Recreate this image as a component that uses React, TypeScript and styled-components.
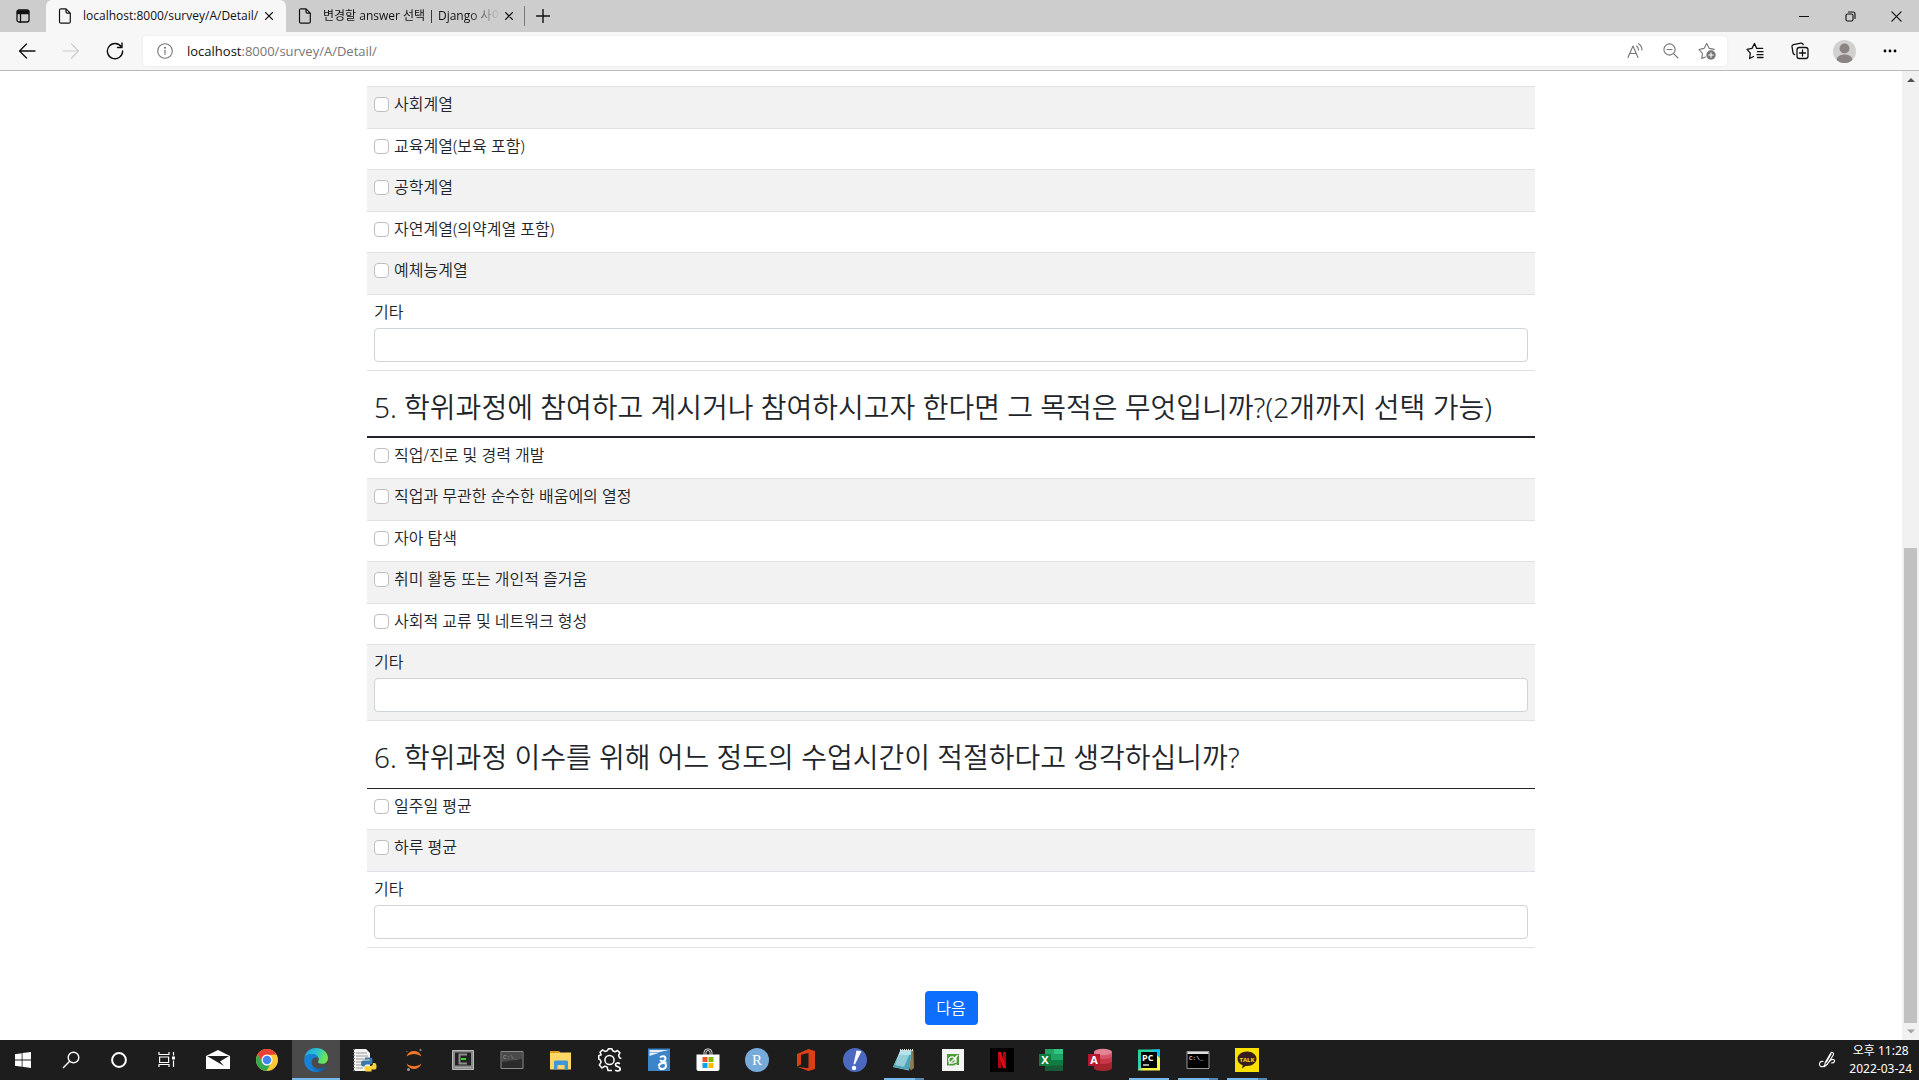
import React from "react";
import styled, { createGlobalStyle } from "styled-components";

const uiFont = `"Open Sans", "Noto Sans CJK KR", sans-serif`;

const GlobalStyle = createGlobalStyle`
  *, *::before, *::after { box-sizing: border-box; }
  body { margin: 0; background: #fff; }
  button, input { font: inherit; }
  svg { display: block; flex: none; }
`;

const Screen = styled.div`
  display: flex;
  flex-direction: column;
  height: 100vh;
  overflow: hidden;
  font-family: ${uiFont};
  color: #212529;
`;

/* ---------- browser chrome ---------- */

const IconButton = styled.button<{ $w?: number; $h?: number; $muted?: boolean }>`
  display: flex;
  flex: none;
  align-items: center;
  justify-content: center;
  width: ${(p) => p.$w ?? 36}px;
  height: ${(p) => p.$h ?? 30}px;
  padding: 0;
  border: 0;
  background: transparent;
  color: ${(p) => (p.$muted ? "#767676" : "#111")};
`;

const TitleBar = styled.header`
  display: flex;
  flex: none;
  height: 32px;
  background: #cdcdcd;
`;

const TabButton = styled.div<{ $active?: boolean }>`
  display: flex;
  align-items: center;
  flex: none;
  width: 240px;
  height: 32px;
  padding: 0 8px 0 12px;
  border-radius: 6px 6px 0 0;
  font-size: 12px;
  color: #111;
  background: ${(p) => (p.$active ? "#f7f7f7" : "transparent")};
`;

const TabLabel = styled.span<{ $fade?: boolean }>`
  flex: 1;
  min-width: 0;
  margin-left: 11px;
  white-space: nowrap;
  line-height: 18px;
  ${(p) => p.$fade && "mask-image: linear-gradient(to right, #000 82%, transparent);"}
`;

const TabSeparator = styled.span`
  width: 1px;
  height: 20px;
  margin: 6px 0 0 -2px;
  background: #777;
`;

const WindowControls = styled.div`
  display: flex;
  margin-left: auto;
`;

const Toolbar = styled.div`
  display: flex;
  align-items: center;
  flex: none;
  height: 39px;
  padding: 0 7px 0 5px;
  background: #f7f7f7;
  border-bottom: 1px solid #bbb;
`;

const NavButtons = styled.nav`
  display: flex;
  width: 138px;
`;

const AddressBar = styled.form`
  display: flex;
  align-items: center;
  flex: 1;
  height: 30px;
  padding: 0 2px 0 14px;
  border-radius: 4px;
  background: #fff;
  box-shadow: 0 0 3px #e4e4e4;
  color: #767676;
`;

const Address = styled.div`
  flex: 1;
  margin-left: 14px;
  font-size: 13px;
  line-height: 20px;
  b { font-weight: 400; color: #111; }
`;

const ToolbarActions = styled.div`
  display: flex;
  padding-left: 5px;
`;

/* ---------- page ---------- */

const Viewport = styled.div`
  display: flex;
  flex: 1;
  min-height: 0;
`;

const Page = styled.main`
  flex: 1;
  overflow: hidden;
  padding: 15px 0;
  font-family: "Noto Sans", "Noto Sans CJK KR", sans-serif;
  font-size: 16px;
  font-weight: 350;
`;

const Survey = styled.form`
  display: flex;
  flex-direction: column;
  width: 1168px;
  max-width: 100%;
  margin: 0 auto;
`;

const Question = styled.fieldset`
  min-width: 0;
  margin: 0;
  padding: 0;
  border: 0;
`;

const QuestionTitle = styled.legend<{ $line: number }>`
  display: block;
  width: 100%;
  height: ${(p) => 69 - p.$line}px;
  padding: 19px 7px 0;
  border-bottom: ${(p) => p.$line}px solid #212529;
  font-size: 28px;
  line-height: 34px;
`;

const Options = styled.ul<{ $topLine?: boolean }>`
  list-style: none;
  margin: 0;
  padding: 0;
  border-top: ${(p) => (p.$topLine ? "1px solid #dee2e6" : "0")};
`;

const Option = styled.li<{ $shaded: boolean }>`
  height: ${(p) => (p.$shaded ? 42 : 41)}px;
  padding: 6px 7px;
  border-bottom: 1px solid #dee2e6;
  background: ${(p) => (p.$shaded ? "#f2f2f2" : "#fff")};
  label {
    display: inline-flex;
    align-items: center;
    gap: 5px;
    line-height: 22px;
  }
`;

const Check = styled.input`
  appearance: none;
  width: 15px;
  height: 15px;
  margin: 0;
  border: 1px solid #bfbfbf;
  border-radius: 4px;
  background: #fff;
`;

const OtherOption = styled.li<{ $shaded: boolean }>`
  display: flex;
  flex-direction: column;
  gap: 5px;
  height: 76px;
  padding: 6px 7px;
  border-bottom: 1px solid #dee2e6;
  background: ${(p) => (p.$shaded ? "#f2f2f2" : "#fff")};
  label { line-height: 22px; }
`;

const TextField = styled.input`
  width: 100%;
  height: 34px;
  padding: 5px 11px;
  border: 1px solid #ced4da;
  border-radius: 4px;
  background: #fff;
`;

const NextButton = styled.button`
  align-self: center;
  width: 53px;
  height: 34px;
  margin-top: 43px;
  padding: 0;
  border: 0;
  border-radius: 4px;
  background: #0d6efd;
  color: #fff;
  line-height: 22px;
`;

const ScrollTrack = styled.div`
  display: flex;
  flex-direction: column;
  flex: none;
  width: 17px;
  background: #f1f1f1;
`;
const ScrollGap = styled.div`flex: 460;`;
const ScrollThumb = styled.div`
  flex: 475;
  margin: 0 2px;
  background: #c1c1c1;
`;

/* ---------- taskbar ---------- */

const Taskbar = styled.footer`
  display: flex;
  flex: none;
  height: 40px;
  background: #1d1d1d;
  color: #fff;
`;

const TaskButton = styled.button<{ $active?: boolean }>`
  position: relative;
  display: flex;
  align-items: center;
  justify-content: center;
  width: 48px;
  height: 40px;
  padding: 0;
  border: 0;
  color: #fff;
  background: ${(p) => (p.$active ? "#4a4a4a" : "transparent")};
`;

const SystemGroup = styled.div`
  display: flex;
  margin-right: 2px;
  ${TaskButton} { padding-right: 2px; }
`;

const AppGroup = styled.div`
  display: flex;
  gap: 1px;
`;

const Running = styled.span<{ $kind: "full" | "single" | "stack" }>`
  position: absolute;
  bottom: 0;
  left: ${(p) => (p.$kind === "full" ? 0 : 4)}px;
  right: ${(p) => (p.$kind === "full" ? 0 : 4)}px;
  height: 2px;
  background: ${(p) =>
    p.$kind === "stack" ? "linear-gradient(to right, #76b9ed 31px, #5588b0 31px)" : "#76b9ed"};
`;

const Tray = styled.div`
  display: flex;
  align-items: center;
  gap: 13px;
  margin-left: auto;
  padding-right: 7px;
`;

const Clock = styled.div`
  font-size: 12px;
  font-family: "Noto Sans", "Noto Sans CJK KR", sans-serif;
  line-height: 18px;
  text-align: center;
`;

/* ---------- icons ---------- */

type LineProps = { w?: number; h?: number; box?: string; sw?: number; children: React.ReactNode };
const Line = ({ w = 16, h, box, sw = 1, children }: LineProps) => (
  <svg width={w} height={h ?? w} viewBox={box ?? `0 0 ${w} ${h ?? w}`} fill="none" stroke="currentColor" strokeWidth={sw} strokeLinecap="round" strokeLinejoin="round" aria-hidden="true">
    {children}
  </svg>
);

const PageIcon = () => (
  <Line w={14} h={16} sw={1.2}>
    <path d="M3 .8h5l4.300 4.300v8.600q0 1.500-1.500 1.500H3q-1.500 0-1.500-1.500V2.300Q1.500.8 3 .8ZM8 .8v3q0 1.300 1.300 1.300h3" />
  </Line>
);
const CloseIcon = ({ size = 8, sw = 1.6 }) => (
  <Line w={size} box="0 0 10 10" sw={sw}><path d="M.8.8l8.400 8.400M9.200.8L.8 9.200" /></Line>
);
const TabMenuIcon = () => (
  <Line w={14} sw={1.3}>
    <rect x="1" y="1" width="12" height="12" rx="2" />
    <path d="M1.500 2h11v2.500h-11z" fill="currentColor" /><path d="M4.500 4v9" />
  </Line>
);
const BackIcon = () => <Line w={18} sw={1.3}><path d="M17 9H1.500M8.500 2L1.500 9l7 7" /></Line>;
const ForwardIcon = () => <Line w={18} sw={1.2}><path d="M1 9h15.500M9.500 2l7 7-7 7" stroke="#ccc" /></Line>;
const ReloadIcon = () => <Line w={18} sw={1.4}><path d="M15.500 5.200A7.600 7.600 0 1 0 16.600 9M16 1v4.500h-4.500" /></Line>;
const InfoIcon = () => (
  <Line w={16} sw={1.1}><circle cx="8" cy="8" r="7.300" /><path d="M8 7.200v4.300" /><circle cx="8" cy="4.700" r=".5" fill="currentColor" /></Line>
);
const ReadAloudIcon = () => (
  <Line w={16} sw={1.1}><path d="M1 14.500L6 3l5 11.500M2.800 10.500h6.400M9.500 3q2 1.500 2 4M11.500.8q3.500 2.200 3.500 6.200" /></Line>
);
const ZoomOutIcon = () => (
  <Line w={16} sw={1.1}><circle cx="6.500" cy="6.500" r="5.600" /><path d="M10.600 10.600L15 15M4 6.500h5" /></Line>
);
const FavoriteAddIcon = () => (
  <Line w={18} sw={1.1}>
    <path d="M7.500 15l-3.700 1.600.6-5.200L1 7.500l5-1.100L8.700 1.500l2.600 4.900 4.900 1" />
    <circle cx="13" cy="13" r="4.700" fill="#767676" stroke="none" /><path d="M13 10.800v4.400M10.800 13h4.400" stroke="#fff" />
  </Line>
);
const FavoritesIcon = () => (
  <Line w={18} sw={1.3}>
    <path d="M7.500 14.500l-3.900 2 .7-5.400L1 7.400l5-1L8.500 1.500 10.700 6.400h6M11.500 9.700H17M11 12.700h6M11.500 15.500H17" />
  </Line>
);
const CollectionsIcon = () => (
  <Line w={18} sw={1.3}>
    <rect x="6" y="5.500" width="11" height="11" rx="2.300" /><path d="M11.500 8v6M8.500 11h6M3.600 12.500q-1.300-.3-1.600-1.700L1 4.700q-.2-1.700 1.400-2.100L10 1.200q1.600-.2 2.200 1.500" />
  </Line>
);
const Avatar = () => (
  <svg width="23" height="23" viewBox="0 0 24 24" aria-hidden="true">
    <clipPath id="avatarClip"><circle cx="12" cy="12" r="12" /></clipPath>
    <g clipPath="url(#avatarClip)"><rect width="24" height="24" fill="#d2d0ce" /><circle cx="12" cy="8.800" r="5.200" fill="#8a8583" /><ellipse cx="12" cy="20.500" rx="8.300" ry="5.300" fill="#8a8583" /></g>
  </svg>
);
const MoreIcon = () => (
  <svg width="14" height="4" viewBox="0 0 14 4" aria-hidden="true"><circle cx="2" cy="2" r="1.400" /><circle cx="7" cy="2" r="1.400" /><circle cx="12" cy="2" r="1.400" /></svg>
);
const Arrow = ({ down = false }) => (
  <svg width="17" height="17" viewBox="0 0 17 17" aria-hidden="true">
    <path d={down ? "M5 6.500h8l-4 4z" : "M5 11h8l-4-4z"} fill={down ? "#a3a3a3" : "#505050"} />
  </svg>
);

const Art = ({ children, size = 24 }: { children: React.ReactNode; size?: number }) => (
  <svg width={size} height={size} viewBox="0 0 24 24" fontFamily='"Open Sans", sans-serif' aria-hidden="true">{children}</svg>
);

const WindowsLogo = () => (
  <Art><path fill="#fff" d="M4 6.200l6.700-1v6.400H4zM11.500 5.100L20 4v7.600h-8.500zM4 12.400h6.700v6.400l-6.700-1zM11.500 12.400H20V20l-8.500-1.200z" /></Art>
);
const SearchLogo = () => (
  <Art><g fill="none" stroke="#fff" strokeWidth="1.400"><circle cx="14.500" cy="9.500" r="5.300" /><path d="M10.700 13.300L4 20" /></g></Art>
);
const CortanaLogo = () => <Art><circle cx="12" cy="12" r="6.900" fill="none" stroke="#fff" strokeWidth="2" /></Art>;
const TaskViewLogo = () => (
  <Art><path d="M4 4v2.500h10V4M4 19v-2.500h10V19M4.600 9h9v5.500h-9zM18.500 4v3.500M18.500 12.500V19" fill="none" stroke="#fff" strokeWidth="1.200" /><path d="M17 8.500h3v3h-3z" fill="#fff" /></Art>
);
const MailLogo = () => (
  <Art><path fill="#fff" d="M0 8l12-6 12 6v13H0z" /><path fill="#1d1d1d" d="M1 8h22l-9 5.500 4 4.500L1 8z" /></Art>
);
const ChromeLogo = () => (
  <Art>
    <circle cx="12" cy="12" r="11" fill="#fcc934" />
    <path d="M2.500 6.500A11 11 0 0 1 21.600 6.600L12 7 7.600 14.500z" fill="#ea4335" />
    <path d="M2.500 6.500A11 11 0 0 0 11.500 23L16.300 14.500 12 17 7.700 14.500z" fill="#34a853" />
    <circle cx="12" cy="12" r="5.500" fill="#fff" /><circle cx="12" cy="12" r="4.300" fill="#4285f4" />
  </Art>
);
const EdgeLogo = () => (
  <Art>
    <defs>
      <linearGradient id="edgeTop" x1="0" x2="1" y1="0" y2=".3"><stop offset="0" stopColor="#1b9de2" /><stop offset=".55" stopColor="#2bc3d2" /><stop offset="1" stopColor="#6be84e" /></linearGradient>
      <linearGradient id="edgeLow" x1="0" x2="1"><stop offset="0" stopColor="#1683d9" /><stop offset="1" stopColor="#0c59a4" /></linearGradient>
    </defs>
    <path d="M.3 10.500C1 4 6 0 12 0c7 0 12 4.600 12 10 0 3.500-2.500 5.800-5.800 5.800-3 0-4.600-1-4.200-2 .5-1 .8-1.400.8-2.300C14.800 8.500 11.500 6 8 6 4.500 6 1.500 7.700.3 10.500z" fill="url(#edgeTop)" />
    <path d="M.2 12C.5 8.500 4 6 8 6c3.500 0 6.300 2 6.700 4.500-1-1-2-1.200-3-1.200-3 0-5 3-4.200 6.700.8 3.700 4 6.500 8 7.300-1.100.4-2.300.7-3.500.7C5.400 24 0 18.600.2 12z" fill="#1683d9" />
    <path d="M9.200 10.300C7.300 12 7 15 8.500 17.500c2 3.500 7 4.500 12.500 1.300.7-.3 1 .1.700.6C20 22 17.500 23.500 14.800 23.700 9 23.500 5 19.500 5 14.700c0-2.200 1.800-4 4.200-4.400z" fill="url(#edgeLow)" />
  </Art>
);
const PythonFileLogo = () => (
  <Art>
    <path d="M1 1h12l4 4v18H1z" fill="#f3f3f3" /><path d="M3 5h11M3 8h12M3 11h12M3 14h7M3 17h7M3 20h7" stroke="#999" /><path d="M1 1v22" stroke="#777" strokeDasharray="1 2" strokeWidth="2" />
    <path d="M12 9.500h5.500q2 0 2 2v3q0 2-2 2h-4q-2 0-2 2h-1q-2.500 0-2.500-3t2.500-3h6v-1H12z" fill="#3b78a8" />
    <path d="M18.500 23.500h-5q-2 0-2-1.500v-2q0-2 2-2h4q2.500 0 2.500-3h1.500q2 0 2 3.500t-2 3h-3z" fill="#ffd43b" />
  </Art>
);
const JupyterLogo = () => (
  <Art><path d="M4.500 8.500c2.500-7.300 12.500-7.300 15 0-4.500-3.500-10.500-3.500-15 0zM4.500 15.500c2.500 7.300 12.500 7.300 15 0-4.500 3.500-10.500 3.500-15 0z" fill="#f37626" /><circle cx="18.500" cy="2" r="1.200" fill="#777" /><circle cx="5" cy="3.500" r=".8" fill="#666" /><circle cx="6.500" cy="21.500" r="1.500" fill="#999" /></Art>
);
const EditorLogo = () => (
  <Art><path d="M1.500 2.500h21v19h-21z" fill="#8b8b8b" stroke="#bbb" /><path d="M4 4.500h16v13H4z" fill="#222" /><path d="M16 6.500H8.500v9H16" stroke="#8d8d8d" strokeWidth="2" fill="none" /><path d="M10 11h5" stroke="#2fd62f" strokeWidth="2" /><path d="M4 19.500h16" stroke="#aaa" /></Art>
);
const TerminalLogo = ({ bright = false }) => (
  <Art>
    <path d="M1 3.500h22v17H1z" fill={bright ? "#000" : "#2b2b2b"} stroke={bright ? "#999" : "#8a8a8a"} />
    {bright ? <path d="M1.500 5h21" stroke="#ddd" strokeWidth="2" /> : <path d="M2 4h20v7L2 14z" fill="#4a4a4a" />}
    <text x="3" y={bright ? 12 : 11} fontSize="6" fill={bright ? "#fff" : "#999"} fontFamily='"Liberation Mono", monospace'>C:\_</text>
  </Art>
);
const ExplorerLogo = () => (
  <Art><path d="M1 3h9l1.500 2H1z" fill="#d99312" /><path d="M1 4.500h21v17H1z" fill="#ffd767" /><path d="M1 3h8l1 2H1z" fill="#e0a01e" /><path d="M5 21.500V14q0-1.500 1.500-1.500h11q1.500 0 1.500 1.500v7.500h-3.500V17h-7v4.500z" fill="#3d97d8" /></Art>
);
const SettingsLogo = () => (
  <Art>
    <g fill="none" stroke="#fff" strokeWidth="1.500" strokeLinejoin="round">
      <path d="M14 22.500h-4l-.8-3.400-2.200-1-3 1.800-2.700-2.800 1.800-3-.9-2.300L.7 11V7.800l2.500-1L2 4.300l2.600-2.400L7 3.500l2.400-.9L10.500.7h3.300l.9 2.100 2.300 1L19.500 2.500l2.400 2.400-1.300 2.500.9 2.400 1.800.8" /><circle cx="11.500" cy="12" r="4.600" />
    </g>
    <path d="M21.800 15.800q-1-1-2.600-.8-1.700.3-1.700 1.800 0 1.300 2.300 1.900 2.400.6 2.400 2.300 0 1.900-2.400 2-1.500 0-2.600-.9" fill="none" stroke="#fff" strokeWidth="1.700" />
  </Art>
);
const DocLogo = () => (
  <Art><path d="M1 .5h22v22.500H1z" fill="#3d85c9" /><path d="M2.500 2h19L11 4.500H2.500zM2.500 5h9L2.500 8z" fill="#e6f0fa" /><path d="M13 9.500c1.500-1.800 5.500-1.800 5.500 1s-4 3.500-5.500 1.500M11.500 18c1.500-4 7.500-4 7.500-.5 0 4.500-6.500 4.500-7 1M14.500 14.500h5" stroke="#fff" strokeWidth="1.900" fill="none" /></Art>
);
const StoreLogo = () => (
  <Art><path d="M.5 6.500h23V21q0 2-2 2h-19q-2 0-2-2z" fill="#fff" /><path d="M8 7V4.500Q8 .8 12 .8t4 3.700V7M10 7V4.500Q10 2.500 12 2.500t2 2V7" fill="none" stroke="#ddd" /><path d="M6.500 9h5v5h-5z" fill="#f25022" /><path d="M12.500 9h5v5h-5z" fill="#7fba00" /><path d="M6.500 15h5v5h-5z" fill="#00a4ef" /><path d="M12.500 15h5v5h-5z" fill="#ffb900" /></Art>
);
const RLogo = () => (
  <Art><circle cx="12" cy="12" r="12" fill="#75aadb" /><text x="12" y="17" fontSize="15" textAnchor="middle" fill="#fff" fontFamily='"Liberation Serif", serif'>R</text></Art>
);
const OfficeLogo = () => (
  <Art><path d="M3 6l11.500-5L21 3v18l-6.500 2L3 18.700l11.500 1.500V5L7 6.800v9.700L3 18.500z" fill="#dc3e15" /></Art>
);
const ExclaimLogo = () => (
  <Art><circle cx="12" cy="12" r="12" fill="#4b69c0" /><path d="M13.500 2.500l5 .8-6.500 13h-1.500z" fill="#fff" /><circle cx="11" cy="20" r="2.200" fill="#fff" /></Art>
);
const NotepadLogo = () => (
  <Art><path d="M8 2h13.500L22 20l-3 2.500z" fill="#8a7a4d" /><path d="M8.500 2h11L17 22.500 1 19z" fill="#a7dbe5" /><path d="M7 7h12l-2 15L1 19z" fill="#4ba4b5" /><path d="M8 3h11l-7 16-9-2z" fill="#bfe8ef" opacity=".6" /><path d="M8 2h13" stroke="#ddd" strokeDasharray="1 1" strokeWidth="2" /></Art>
);
const GreenLogo = () => (
  <Art><path d="M1 1h22v22H1z" fill="#f4f4f4" /><path d="M6 6h12v11h-2l-1-1-2 1.500H6z" fill="#4c9a3a" /><circle cx="11" cy="12" r="3.200" fill="none" stroke="#fff" strokeWidth="1.300" /><path d="M8 16l9-9M15 8v7" stroke="#fff" strokeWidth="1.200" /></Art>
);
const NetflixLogo = () => (
  <Art><path d="M0 0h24v24H0z" fill="#000" /><path d="M8 4h3v16l-3 .3zM13 4h3v16.300l-3-.3z" fill="#b1060f" /><path d="M8 4h3l5 16.300-3-.3z" fill="#e50914" /></Art>
);
const ExcelLogo = () => (
  <Art><path d="M6 1h18v22H6z" fill="#185c37" /><path d="M6 1h9v11H6z" fill="#21a366" /><path d="M15 1h9v5.500h-9z" fill="#33c481" /><path d="M15 6.500h9V12h-9z" fill="#21a366" /><path d="M6 12h9v5.500H6z" fill="#107c41" /><path d="M15 12h9v5.500h-9z" fill="#107c41" /><path d="M0 6h12v12H0z" fill="#107c41" /><text x="6" y="16" fontSize="11" fontWeight="700" textAnchor="middle" fill="#fff">X</text></Art>
);
const AccessLogo = () => (
  <Art><path d="M6 4v16c0 4 18 4 18 0V4z" fill="#a4262c" /><path d="M6 4v9c0 4 18 4 18 0V4z" fill="#c9364a" /><path d="M6 4v4c0 4 18 4 18 0V4z" fill="#d65468" /><ellipse cx="15" cy="4" rx="9" ry="3.200" fill="#e38494" /><path d="M0 6h12v12H0z" fill="#b5172f" /><text x="6" y="16" fontSize="11" fontWeight="700" textAnchor="middle" fill="#fff">A</text></Art>
);
const PyCharmLogo = () => (
  <Art>
    <defs><linearGradient id="pcGrad" x1="0" y1="0" x2="1" y2="1"><stop offset="0" stopColor="#21d789" /><stop offset=".45" stopColor="#3cc8c0" /><stop offset=".6" stopColor="#fcf84a" /><stop offset="1" stopColor="#fcf84a" /></linearGradient></defs>
    <path d="M1 1.500h22v21H1z" fill="url(#pcGrad)" /><path d="M15 1.500h8v9z" fill="#07c3f2" /><path d="M4 4h16v16H4z" fill="#000" />
    <text x="5" y="12.500" fontSize="9" fontWeight="700" fill="#fff">PC</text><path d="M6 17h6" stroke="#fff" strokeWidth="1.300" />
  </Art>
);
const TalkLogo = () => (
  <Art><path d="M0 0h24v24H0z" fill="#fae100" /><path d="M12 3.500c5.500 0 9.500 3.300 9.500 7.300s-4 7.200-9.500 7.200l-1.500-.1L7 20.500l.7-3.200C4.600 16.200 2.500 13.700 2.500 10.800c0-4 4-7.300 9.500-7.300z" fill="#371d1e" /><text x="12" y="13.500" fontSize="6" fontWeight="700" textAnchor="middle" fill="#fae100">TALK</text></Art>
);
const PenIcon = () => (
  <Line w={18} sw={1.2}><path d="M5 10.500c-2.500-.5-3.700 1-3.500 3 .2 2 2.500 3 4.500 1.500M6.500 15.500l.8-4L12.500 2.500q1-1.500 2.300-.8t.5 2.300L9.500 13zM8.500 11l4.500-8M11 11q2-3 4.500-2.500 1.500.5 1 2t-3 1.500" /></Line>
);

/* ---------- data ---------- */

type QuestionData = { id: string; title?: string; line?: number; firstShaded: boolean; options: string[] };

const questions: QuestionData[] = [
  { id: "q4", firstShaded: true, options: ["사회계열", "교육계열(보육 포함)", "공학계열", "자연계열(의약계열 포함)", "예체능계열"] },
  {
    id: "q5", line: 2, firstShaded: false,
    title: "5. 학위과정에 참여하고 계시거나 참여하시고자 한다면 그 목적은 무엇입니까?(2개까지 선택 가능)",
    options: ["직업/진로 및 경력 개발", "직업과 무관한 순수한 배움에의 열정", "자아 탐색", "취미 활동 또는 개인적 즐거움", "사회적 교류 및 네트워크 형성"],
  },
  {
    id: "q6", line: 1, firstShaded: false,
    title: "6. 학위과정 이수를 위해 어느 정도의 수업시간이 적절하다고 생각하십니까?",
    options: ["일주일 평균", "하루 평균"],
  },
];

type TaskApp = { name: string; icon: React.ReactNode; active?: boolean; running?: "full" | "single" | "stack" };

const systemApps: TaskApp[] = [
  { name: "시작", icon: <WindowsLogo /> },
  { name: "검색", icon: <SearchLogo /> },
  { name: "Cortana", icon: <CortanaLogo /> },
  { name: "작업 보기", icon: <TaskViewLogo /> },
];

const apps: TaskApp[] = [
  { name: "메일", icon: <MailLogo /> },
  { name: "Chrome", icon: <ChromeLogo /> },
  { name: "Edge", icon: <EdgeLogo />, active: true, running: "full" },
  { name: "IDLE", icon: <PythonFileLogo /> },
  { name: "Jupyter", icon: <JupyterLogo /> },
  { name: "Editor", icon: <EditorLogo /> },
  { name: "Terminal", icon: <TerminalLogo /> },
  { name: "파일 탐색기", icon: <ExplorerLogo /> },
  { name: "설정", icon: <SettingsLogo /> },
  { name: "문서", icon: <DocLogo /> },
  { name: "Store", icon: <StoreLogo /> },
  { name: "RStudio", icon: <RLogo /> },
  { name: "Office", icon: <OfficeLogo /> },
  { name: "알림", icon: <ExclaimLogo /> },
  { name: "메모장", icon: <NotepadLogo />, running: "stack" },
  { name: "사전", icon: <GreenLogo /> },
  { name: "Netflix", icon: <NetflixLogo /> },
  { name: "Excel", icon: <ExcelLogo /> },
  { name: "Access", icon: <AccessLogo /> },
  { name: "PyCharm", icon: <PyCharmLogo />, running: "single" },
  { name: "명령 프롬프트", icon: <TerminalLogo bright />, running: "stack" },
  { name: "KakaoTalk", icon: <TalkLogo />, running: "stack" },
];

const TaskItem = ({ app }: { app: TaskApp }) => (
  <TaskButton $active={app.active} aria-label={app.name}>
    {app.icon}
    {app.running && <Running $kind={app.running} />}
  </TaskButton>
);

const QuestionBlock = ({ q }: { q: QuestionData }) => {
  const shaded = (i: number) => (i % 2 === 0) === q.firstShaded;
  return (
    <Question>
      {q.title && <QuestionTitle $line={q.line ?? 1}>{q.title}</QuestionTitle>}
      <Options $topLine={!q.title}>
        {q.options.map((text, i) => (
          <Option key={text} $shaded={shaded(i)}>
            <label><Check type="checkbox" name={q.id} value={text} />{text}</label>
          </Option>
        ))}
        <OtherOption $shaded={shaded(q.options.length)}>
          <label htmlFor={`${q.id}-other`}>기타</label>
          <TextField id={`${q.id}-other`} type="text" />
        </OtherOption>
      </Options>
    </Question>
  );
};

export default function App() {
  return (
    <Screen>
      <GlobalStyle />
      <TitleBar>
        <IconButton $w={46} $h={32} aria-label="탭 작업 메뉴"><TabMenuIcon /></IconButton>
        <TabButton $active>
          <PageIcon />
          <TabLabel>localhost:8000/survey/A/Detail/</TabLabel>
          <IconButton $w={18} $h={22} aria-label="탭 닫기"><CloseIcon /></IconButton>
        </TabButton>
        <TabButton>
          <PageIcon />
          <TabLabel $fade>변경할 answer 선택 | Django 사이</TabLabel>
          <IconButton $w={18} $h={22} aria-label="탭 닫기"><CloseIcon /></IconButton>
        </TabButton>
        <TabSeparator />
        <IconButton $w={36} $h={32} aria-label="새 탭"><Line w={14} sw={1.4}><path d="M7 .5v13M.5 7h13" /></Line></IconButton>
        <WindowControls>
          <IconButton $w={46} $h={32} aria-label="최소화"><Line w={10}><path d="M0 5.500h10" /></Line></IconButton>
          <IconButton $w={46} $h={32} aria-label="복원"><Line w={11} sw={1.1}><rect x="1" y="3" width="7" height="7" rx="1.500" /><path d="M3.500 1h4.500q2 0 2 2v4.500" /></Line></IconButton>
          <IconButton $w={46} $h={32} aria-label="닫기"><CloseIcon size={11} sw={1.1} /></IconButton>
        </WindowControls>
      </TitleBar>

      <Toolbar>
        <NavButtons>
          <IconButton $w={44} aria-label="뒤로"><BackIcon /></IconButton>
          <IconButton $w={44} aria-label="앞으로"><ForwardIcon /></IconButton>
          <IconButton $w={44} aria-label="새로 고침"><ReloadIcon /></IconButton>
        </NavButtons>
        <AddressBar>
          <InfoIcon />
          <Address><b>localhost</b>:8000/survey/A/Detail/</Address>
          <IconButton type="button" $muted aria-label="소리내어 읽기"><ReadAloudIcon /></IconButton>
          <IconButton type="button" $muted aria-label="축소"><ZoomOutIcon /></IconButton>
          <IconButton type="button" $muted aria-label="즐겨찾기에 추가"><FavoriteAddIcon /></IconButton>
        </AddressBar>
        <ToolbarActions>
          <IconButton $w={45} aria-label="즐겨찾기"><FavoritesIcon /></IconButton>
          <IconButton $w={45} aria-label="컬렉션"><CollectionsIcon /></IconButton>
          <IconButton $w={45} aria-label="프로필"><Avatar /></IconButton>
          <IconButton $w={45} aria-label="설정 및 기타"><MoreIcon /></IconButton>
        </ToolbarActions>
      </Toolbar>

      <Viewport>
        <Page>
          <Survey>
            {questions.map((q) => <QuestionBlock key={q.id} q={q} />)}
            <NextButton type="button">다음</NextButton>
          </Survey>
        </Page>
        <ScrollTrack>
          <Arrow />
          <ScrollGap />
          <ScrollThumb />
          <Arrow down />
        </ScrollTrack>
      </Viewport>

      <Taskbar>
        <SystemGroup>{systemApps.map((a) => <TaskItem key={a.name} app={a} />)}</SystemGroup>
        <AppGroup>{apps.map((a) => <TaskItem key={a.name} app={a} />)}</AppGroup>
        <Tray>
          <PenIcon />
          <Clock><div>오후 11:28</div><div>2022-03-24</div></Clock>
        </Tray>
      </Taskbar>
    </Screen>
  );
}
